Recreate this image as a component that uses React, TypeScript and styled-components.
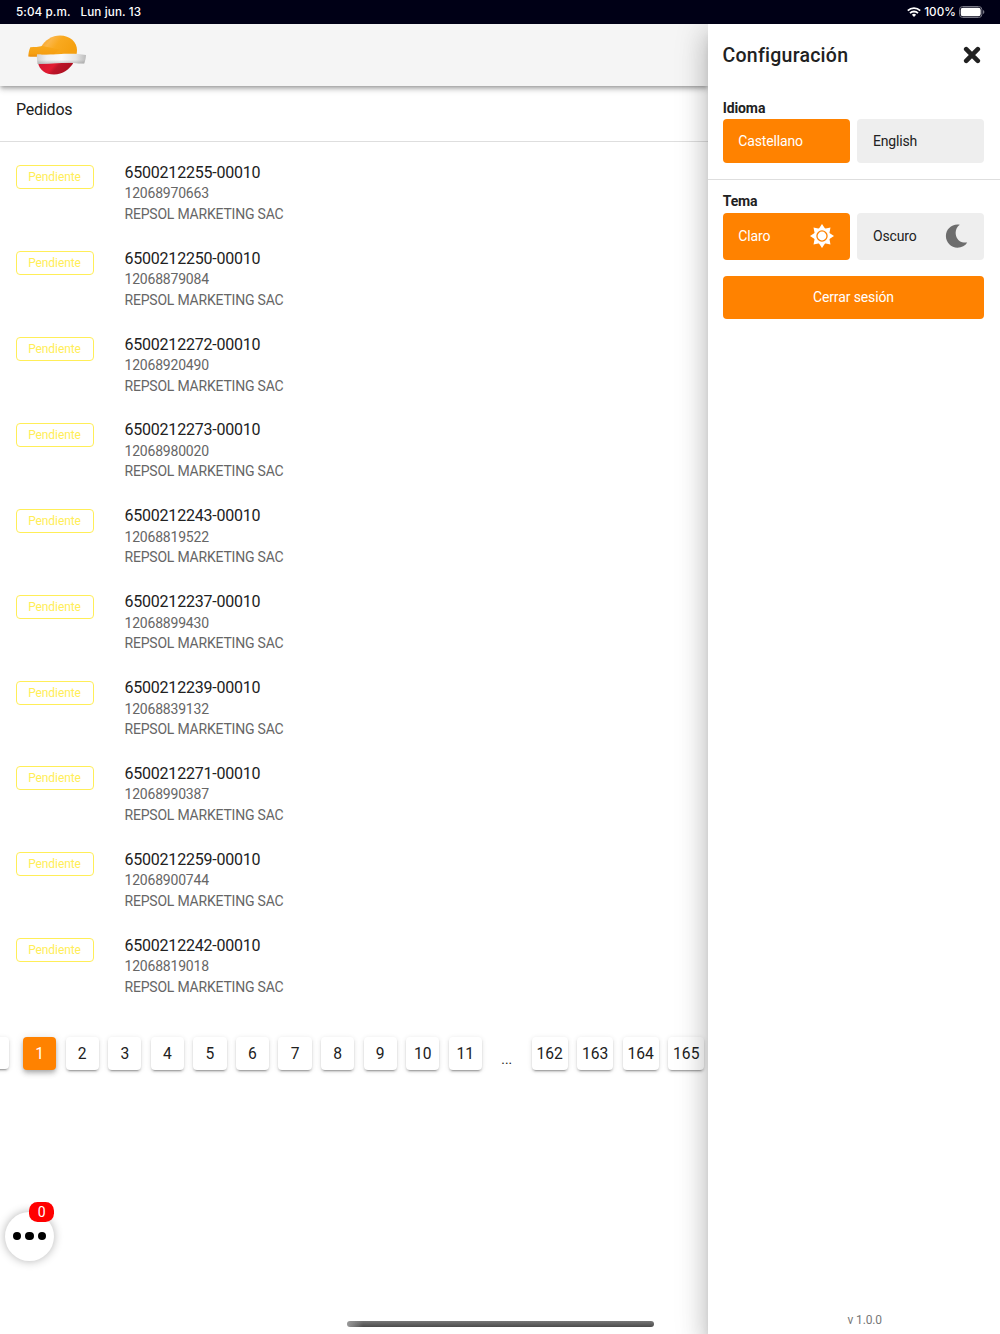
import React from "react";
import styled, { createGlobalStyle } from "styled-components";

const GlobalStyle = createGlobalStyle`
  *, *::before, *::after { box-sizing: border-box; }
  body { margin: 0; background: #fff; }
`;

const Screen = styled.div`
  position: relative;
  width: 1000px;
  height: 1334px;
  overflow: hidden;
  display: flex;
  flex-direction: column;
  background: #fff;
  color: #212121;
  font-family: Roboto, "Liberation Sans", sans-serif;
`;

const StatusBar = styled.header`
  position: relative;
  z-index: 5;
  flex: none;
  height: 23.5px;
  padding: 0 15px 0 16px;
  display: flex;
  align-items: center;
  justify-content: space-between;
  background: #000016;
  color: #fff;
  font: 500 11.7px/24px Inter, sans-serif;
`;

const StatusGroup = styled.div<{ $gap: number }>`
  display: flex;
  align-items: center;
  gap: ${(p) => p.$gap}px;
  white-space: nowrap;
`;

const StatusText = styled.span<{ $spacing?: number }>`
  letter-spacing: ${(p) => p.$spacing ?? 0}px;
`;

const Body = styled.div`
  flex: 1;
  min-height: 0;
  display: flex;
`;

const Main = styled.main`
  width: 707.5px;
  flex: none;
  display: flex;
  flex-direction: column;
`;

const AppBar = styled.div`
  position: relative;
  flex: none;
  height: 62.5px;
  padding: 11px 28px;
  background: #f5f5f5;
  box-shadow: 0 2px 4px -1px rgba(0, 0, 0, 0.3), 0 4px 5px rgba(0, 0, 0, 0.12),
    0 1px 10px rgba(0, 0, 0, 0.1);
`;

const PageTitle = styled.h1`
  flex: none;
  margin: 0;
  height: 55.5px;
  padding: 14px 16px 0;
  border-bottom: 1px solid #dedede;
  font-size: 16px;
  line-height: 19px;
  font-weight: 400;
  letter-spacing: -0.2px;
`;

const OrderList = styled.ul`
  flex: none;
  margin: 0;
  padding: 8px 0 0;
  list-style: none;
`;

const OrderRow = styled.li`
  height: 85.9px;
  padding: 12.7px 16px 0 15.5px;
  display: flex;
  align-items: flex-start;
`;

const Chip = styled.span`
  width: 78px;
  height: 24px;
  margin: 3px 31px 0 0;
  display: flex;
  align-items: center;
  justify-content: center;
  border: 1.4px solid #ffee58;
  border-radius: 4px;
  color: #ffee58;
  font-size: 12px;
  letter-spacing: -0.08px;
`;

const OrderText = styled.div`
  padding-top: 0.6px;
  display: flex;
  flex-direction: column;
`;

const OrderCode = styled.span`
  font-size: 16px;
  line-height: 20px;
  letter-spacing: -0.22px;
`;

const OrderDetail = styled.span`
  position: relative;
  top: 0.4px;
  font-size: 14px;
  line-height: 20.6px;
  letter-spacing: -0.2px;
  color: #666;
`;

const Pagination = styled.nav`
  display: flex;
  align-items: flex-start;
  margin: 28.3px 0 0 -24.5px;
  gap: 9.38px;
`;

const PageButton = styled.button<{ $active?: boolean }>`
  flex: none;
  min-width: 33.2px;
  height: 33.2px;
  padding: 0 4.9px;
  border: 0;
  border-radius: 4px;
  background: ${(p) => (p.$active ? "#ff8200" : "#fff")};
  color: ${(p) => (p.$active ? "#fff" : "#212121")};
  font: 400 15.63px/33px Roboto, sans-serif;
  box-shadow: ${(p) =>
    p.$active
      ? "0 2px 4px -1px rgba(0,0,0,.2), 0 4px 5px rgba(0,0,0,.14), 0 1px 10px rgba(0,0,0,.12)"
      : "0 3px 1px -2px rgba(0,0,0,.2), 0 2px 2px rgba(0,0,0,.14), 0 1px 5px rgba(0,0,0,.12)"};
`;

const PreviousButton = styled(PageButton)`
  height: 32px;
  margin-right: 5px;
`;

const Ellipsis = styled.span`
  flex: none;
  width: 31px;
  height: 33px;
  padding-top: 12px;
  text-align: center;
  font-size: 13.67px;
  line-height: 20px;
`;

const Drawer = styled.aside`
  position: relative;
  z-index: 2;
  flex: 1;
  display: flex;
  flex-direction: column;
  background: #fff;
  box-shadow: 0 8px 10px -5px rgba(0, 0, 0, 0.2), 0 16px 24px 2px rgba(0, 0, 0, 0.14),
    0 6px 30px 5px rgba(0, 0, 0, 0.12);
`;

const DrawerHeader = styled.div`
  height: 62.5px;
  padding: 1px 19px 0 15px;
  display: flex;
  align-items: center;
  justify-content: space-between;
`;

const DrawerTitle = styled.h2`
  margin: 1px 0 0;
  font-size: 19.53px;
  line-height: 31px;
  font-weight: 500;
  letter-spacing: 0.24px;
`;

const CloseButton = styled.button`
  display: flex;
  padding: 0;
  border: 0;
  background: none;
  color: #212121;
`;

const Section = styled.section<{ $top: number; $divided?: boolean }>`
  padding: ${(p) => p.$top}px 15.8px 15.8px 15.2px;
  border-bottom: ${(p) => (p.$divided ? "1px solid #dedede" : "0")};
`;

const SectionLabel = styled.h3`
  margin: 0 0 2.5px;
  font-size: 14px;
  line-height: 18px;
  font-weight: 700;
  letter-spacing: -0.1px;
`;

const Options = styled.div`
  display: grid;
  grid-template-columns: 1fr 1fr;
  gap: 7.8px;
`;

const Option = styled.button<{ $active?: boolean; $height: number }>`
  height: ${(p) => p.$height}px;
  padding: 0 15.6px;
  display: flex;
  align-items: center;
  justify-content: space-between;
  border: 0;
  border-radius: 4px;
  background: ${(p) => (p.$active ? "#ff8200" : "#eee")};
  color: ${(p) => (p.$active ? "#fff" : "#212121")};
  font: 400 14px/20px Roboto, sans-serif;
  letter-spacing: -0.15px;
`;

const LogoutButton = styled.button`
  height: 43.9px;
  margin: 0 15.8px 0 15.2px;
  padding: 0 0 1.4px;
  border: 0;
  border-radius: 4px;
  background: #ff8200;
  color: #fff;
  font: 400 14px/20px Roboto, sans-serif;
  letter-spacing: -0.12px;
`;

const Version = styled.span`
  margin: auto auto 6px;
  padding-left: 22px;
  color: #777;
  font-size: 12px;
  letter-spacing: -0.12px;
  line-height: 16px;
`;

const ChatButton = styled.button`
  position: absolute;
  left: 5px;
  top: 1211.5px;
  width: 49px;
  height: 49px;
  padding: 0;
  display: flex;
  align-items: center;
  justify-content: center;
  gap: 4px;
  border: 0;
  border-radius: 50%;
  background: #fff;
  box-shadow: 0 0 10px rgba(0, 0, 0, 0.3);
`;

const Dot = styled.i`
  width: 8.3px;
  height: 8.3px;
  border-radius: 50%;
  background: #000;
`;

const Badge = styled.span`
  position: absolute;
  left: 24.4px;
  top: -10px;
  width: 24.6px;
  height: 20px;
  border-radius: 8.5px;
  background: #f00;
  color: #fff;
  font: 400 14px/20px Roboto, sans-serif;
  text-align: center;
`;

const HomeIndicator = styled.div`
  position: absolute;
  z-index: 4;
  left: 346.5px;
  top: 1321px;
  width: 307.5px;
  height: 5.5px;
  border-radius: 3px;
  background: linear-gradient(90deg, #999, transparent 16px),
    linear-gradient(#777, #4b4b4b);
`;

const Logo = () => (
  <svg width="58" height="41" viewBox="0 0 58 41" aria-label="Repsol">
    <defs>
      <linearGradient id="sun" x1="0" y1="0" x2="1" y2="0.4">
        <stop offset="0" stopColor="#f49b18" />
        <stop offset="0.32" stopColor="#fbb648" />
        <stop offset="0.55" stopColor="#f9a91f" />
        <stop offset="1" stopColor="#f5a010" />
      </linearGradient>
      <linearGradient id="band" x1="0" y1="0" x2="0" y2="1">
        <stop offset="0" stopColor="#f8a81c" />
        <stop offset="0.7" stopColor="#f6a012" />
        <stop offset="1" stopColor="#e98c0c" />
      </linearGradient>
      <linearGradient id="silver" x1="0" y1="0" x2="1" y2="0">
        <stop offset="0" stopColor="#d2d2d2" />
        <stop offset="0.2" stopColor="#f1f1f1" />
        <stop offset="0.5" stopColor="#fafafa" />
        <stop offset="0.8" stopColor="#e4e4e4" />
        <stop offset="1" stopColor="#bcbcbc" />
      </linearGradient>
      <linearGradient id="shade" x1="0" y1="0" x2="0" y2="1">
        <stop offset="0.6" stopColor="#777" stopOpacity="0" />
        <stop offset="1" stopColor="#777" stopOpacity="0.4" />
      </linearGradient>
      <linearGradient id="red" x1="0" y1="0.2" x2="1" y2="0.5">
        <stop offset="0" stopColor="#d31832" />
        <stop offset="0.42" stopColor="#e21b31" />
        <stop offset="0.55" stopColor="#bd1529" />
        <stop offset="1" stopColor="#a90f20" />
      </linearGradient>
    </defs>
    <path d="M13 12C17 5 24 .4 32 .4c10 0 17 6.6 17 14.6 0 1.8-.2 3-.6 4.800H13z" fill="url(#sun)" />
    <path d="M2.300 12.200c4.200 0 8.200-.2 12-1.100L32 14.500l-6 5-17 .3v1.900c-3 .2-6 .2-8.700-.1.200-3.500.7-6.500 2-9.400z" fill="url(#band)" />
    <path d="M10 27.500h35.500C42 34 34.500 39.500 26 39.500c-8.700 0-14.800-4.500-16-12z" fill="url(#red)" />
    <path id="ribbon" d="M9 19.600c8 .1 14 0 21-.4 9-.5 19-.8 28 .8-.1 3-.8 6-1.800 8.600-3.600.1-6.700-.4-10.700-.7-12-.5-23 1.300-35.900 1-.6-3-.9-6-.6-9.300z" fill="url(#silver)" />
    <path d="M9 19.600c8 .1 14 0 21-.4 9-.5 19-.8 28 .8-.1 3-.8 6-1.800 8.600-3.600.1-6.700-.4-10.700-.7-12-.5-23 1.300-35.900 1-.6-3-.9-6-.6-9.300z" fill="url(#shade)" />
  </svg>
);

const WifiIcon = () => (
  <svg width="14" height="10" viewBox="0 0 14 10" fill="none" stroke="#fff" strokeWidth="1.8">
    <path d="M.8 3.7a9 9 0 0 1 12.4 0M3 6.1a5.8 5.8 0 0 1 8 0" />
    <path d="M7 9.9 4.9 7.8a3 3 0 0 1 4.2 0z" fill="#fff" stroke="none" />
  </svg>
);

const BatteryIcon = () => (
  <svg width="26" height="12" viewBox="0 0 26 12">
    <rect x=".5" y=".5" width="22.4" height="11" rx="3.2" fill="none" stroke="#777785" />
    <rect x="1.7" y="1.7" width="20" height="8.6" rx="2.2" fill="#fff" />
    <path d="M24 4v4q1.4-.6 1.400-2T24 4z" fill="#777785" />
  </svg>
);

const CloseIcon = () => (
  <svg width="18" height="18" viewBox="0 0 18 18" stroke="currentColor" strokeWidth="4.6" strokeLinecap="round">
    <path d="m3.2 3.2 11.6 11.6M14.8 3.2 3.2 14.8" />
  </svg>
);

const RAYS = [0, 45, 90, 135, 180, 225, 270, 315];

const SunIcon = () => (
  <svg width="24" height="24" viewBox="-12 -12 24 24" fill="#fff">
    {RAYS.map((angle) => (
      <path key={angle} d="M-3.3-7 0-12 3.3-7z" transform={`rotate(${angle})`} />
    ))}
    <circle r="6.8" fill="none" stroke="#fff" strokeWidth="2.2" />
    <circle r="4.4" />
  </svg>
);

const MoonIcon = () => (
  <svg width="24" height="24" viewBox="0 0 24 24" fill="#6d6d6d">
    <path d="M14.8.7C7.2-.7.9 5 .9 12c0 6.6 5.2 11.700 11.6 11.700 4.200 0 7.800-2 9.700-5.200-5.500.7-9.700-1.900-11.100-6.600C9.800 7.600 11.300 3.200 14.800.7z" />
  </svg>
);

const ORDERS = [
  ["6500212255-00010", "12068970663"],
  ["6500212250-00010", "12068879084"],
  ["6500212272-00010", "12068920490"],
  ["6500212273-00010", "12068980020"],
  ["6500212243-00010", "12068819522"],
  ["6500212237-00010", "12068899430"],
  ["6500212239-00010", "12068839132"],
  ["6500212271-00010", "12068990387"],
  ["6500212259-00010", "12068900744"],
  ["6500212242-00010", "12068819018"],
];

const FIRST_PAGES = [1, 2, 3, 4, 5, 6, 7, 8, 9, 10, 11];
const LAST_PAGES = [162, 163, 164, 165];

export default function App() {
  return (
    <Screen>
      <GlobalStyle />
      <StatusBar>
        <StatusGroup $gap={10}>
          <StatusText $spacing={0.08}>5:04 p.m.</StatusText>
          <StatusText $spacing={0.1}>Lun jun. 13</StatusText>
        </StatusGroup>
        <StatusGroup $gap={3.2}>
          <WifiIcon />
          <StatusText>100%</StatusText>
          <BatteryIcon />
        </StatusGroup>
      </StatusBar>
      <Body>
        <Main>
          <AppBar>
            <Logo />
          </AppBar>
          <PageTitle>Pedidos</PageTitle>
          <OrderList>
            {ORDERS.map(([code, reference]) => (
              <OrderRow key={code}>
                <Chip>Pendiente</Chip>
                <OrderText>
                  <OrderCode>{code}</OrderCode>
                  <OrderDetail>{reference}</OrderDetail>
                  <OrderDetail>REPSOL MARKETING SAC</OrderDetail>
                </OrderText>
              </OrderRow>
            ))}
          </OrderList>
          <Pagination>
            <PreviousButton aria-label="Anterior" />
            {FIRST_PAGES.map((page) => (
              <PageButton key={page} $active={page === 1}>
                {page}
              </PageButton>
            ))}
            <Ellipsis>...</Ellipsis>
            {LAST_PAGES.map((page) => (
              <PageButton key={page}>{page}</PageButton>
            ))}
          </Pagination>
        </Main>
        <Drawer>
          <DrawerHeader>
            <DrawerTitle>Configuración</DrawerTitle>
            <CloseButton aria-label="Cerrar">
              <CloseIcon />
            </CloseButton>
          </DrawerHeader>
          <Section $top={12.6} $divided>
            <SectionLabel>Idioma</SectionLabel>
            <Options>
              <Option $active $height={43.9}>Castellano</Option>
              <Option $height={43.9}>English</Option>
            </Options>
          </Section>
          <Section $top={12.6}>
            <SectionLabel>Tema</SectionLabel>
            <Options>
              <Option $active $height={46.9}>
                Claro
                <SunIcon />
              </Option>
              <Option $height={46.9}>
                Oscuro
                <MoonIcon />
              </Option>
            </Options>
          </Section>
          <LogoutButton>Cerrar sesión</LogoutButton>
          <Version>v 1.0.0</Version>
        </Drawer>
      </Body>
      <ChatButton aria-label="Chat">
        <Dot />
        <Dot />
        <Dot />
        <Badge>0</Badge>
      </ChatButton>
      <HomeIndicator />
    </Screen>
  );
}
